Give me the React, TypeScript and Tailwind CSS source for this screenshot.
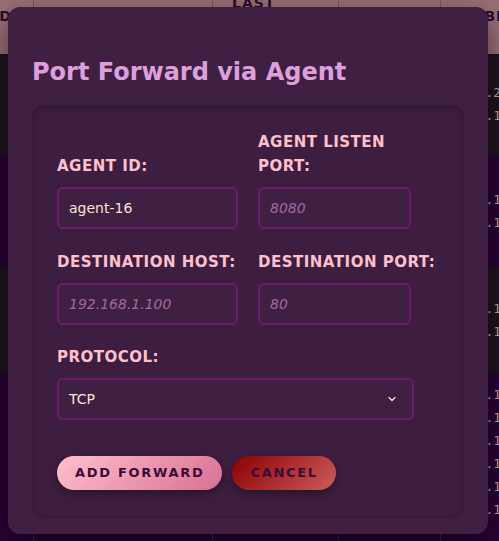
import React from "react";

const font = { fontFamily: '"DejaVu Sans", "Liberation Sans", sans-serif' };

function Row({ bg, h, lines, first, second, third }: { bg: string; h: string; lines: string[]; first?: string; second?: string; third?: string }) {
  return (
    <div className={`grid grid-cols-[33px_179px_126px_102px_1fr] ${bg} ${h}`}>
      <div />
      <div className="border-l border-[#3a2a3a] px-5 flex items-center text-[13px] text-[#b8a8b0]">{first}</div>
      <div className="border-l border-[#3a2a3a] px-[19px] flex items-center text-[13px] text-[#b8a8b0]">{second}</div>
      <div className="border-l border-[#3a2a3a] px-[19px] flex items-center text-[13px] text-[#b8a8b0]">{third}</div>
      <div className="border-l border-[#3a2a3a] pl-[21px] flex flex-col justify-center gap-[5px] text-[13px] leading-[18px] text-[#b8a8b0] whitespace-nowrap overflow-hidden" style={{ fontFamily: '"DejaVu Sans Mono", monospace' }}>
        {lines.map((l, i) => (
          <div key={i}>{l}</div>
        ))}
      </div>
    </div>
  );
}

function Field({ label, placeholder, value, w }: { label: React.ReactNode; placeholder?: string; value?: string; w: string }) {
  return (
    <div className="flex flex-col justify-end">
      <label className="text-[15px] leading-[24px] font-bold tracking-[0.5px] text-[#ffc0cb] uppercase mb-[9px]">{label}</label>
      <input
        readOnly
        defaultValue={value}
        placeholder={placeholder}
        className={`${w} h-[42px] rounded-[6px] border-2 border-[#6c1c70] bg-[#3f1f42] px-[10px] text-[14px] text-[#f5e6d3] placeholder:italic placeholder:text-[#a06aa0] outline-none`}
        style={font}
      />
    </div>
  );
}

export default function App() {
  return (
    <div className="relative w-[499px] h-[541px] overflow-hidden bg-[#290333]" style={font}>
      {/* background table */}
      <div className="flex flex-col">
        <div className="grid grid-cols-[33px_179px_126px_102px_1fr] bg-[#9a7077] h-[54px] text-[14px] font-bold text-[#2a0a2a] tracking-[1px]">
          <div className="flex items-start pt-[6px] overflow-hidden whitespace-nowrap"><span className="ml-[-7px]">ID</span></div>
          <div className="border-l border-[#7a5660]" />
          <div className="border-l border-[#7a5660] px-[19px] leading-[22px] mt-[-8px]">LAST<br />SEEN</div>
          <div className="border-l border-[#7a5660]" />
          <div className="border-l border-[#7a5660] pl-[20px] pt-[6px] whitespace-nowrap overflow-hidden">SUBNET</div>
        </div>
        <Row bg="bg-[#1f131f]" h="h-[101px]" lines={["172.20.0.5", "172.16.0.8"]} />
        <Row bg="bg-[#290333]" h="h-[113px]" lines={["172.16.0.3", "172.16.4.1"]} />
        <Row bg="bg-[#1f131f]" h="h-[104px]" lines={["172.16.2.7", "172.16.9.2"]} />
        <Row bg="bg-[#290333]" h="h-[160px]" lines={["172.16.0.1", "172.16.0.2", "172.16.0.3", "172.16.0.4", "172.16.0.5", "172.16.0.6"]} />
        <Row bg="bg-[#290333]" h="h-[40px]" lines={["172.16.1.1"]} first="katana" second="6:50:12" third="4m 1s" />
      </div>

      {/* modal */}
      <div className="absolute left-[8px] top-[7px] w-[480px] h-[527px] rounded-[12px] bg-[#3f1f42] shadow-[0_10px_30px_rgba(0,0,0,0.5)] px-6 pt-[49px]">
        <h2 className="text-[24px] leading-[32px] font-bold text-[#dda0dd] mb-[17px]">Port Forward via Agent</h2>
        <div className="rounded-[12px] bg-[#3d1e40] border border-[#381a3b] shadow-[inset_0_2px_6px_rgba(0,0,0,0.25)] px-6 pt-6 pb-[27px]">
          <div className="grid grid-cols-[181px_181px] gap-x-5 gap-y-[21px]">
            <Field label="Agent ID:" value="agent-16" w="w-[181px]" />
            <Field label={<>Agent Listen<br />Port:</>} placeholder="8080" w="w-[153px]" />
            <Field label="Destination Host:" placeholder="192.168.1.100" w="w-[181px]" />
            <Field label="Destination Port:" placeholder="80" w="w-[153px]" />
          </div>
          <div className="mt-[20px] flex flex-col">
            <label className="text-[15px] leading-[24px] font-bold tracking-[0.5px] text-[#ffc0cb] uppercase mb-[9px]">Protocol:</label>
            <div className="relative w-[357px] h-[42px] rounded-[6px] border-2 border-[#6c1c70] bg-[#3f1f42] px-[10px] flex items-center text-[14px] text-[#f5e6d3]">
              TCP
              <svg className="absolute right-[16px] top-[16px]" width="8" height="6" viewBox="0 0 8 6" fill="none">
                <path d="M1 1.5 L4 4.5 L7 1.5" stroke="#f5e6d3" strokeWidth="1.3" strokeLinecap="round" strokeLinejoin="round" />
              </svg>
            </div>
          </div>
          <div className="mt-[36px] flex gap-[10px]">
            <button className="h-[34px] px-[18px] rounded-full bg-[linear-gradient(135deg,#ffc0cb,#d87093)] text-[13px] font-bold tracking-[1.7px] text-[#3a0a3a] shadow-[0_4px_10px_rgba(0,0,0,0.35)]">
              ADD FORWARD
            </button>
            <button className="h-[34px] px-[18px] rounded-full bg-[linear-gradient(135deg,#8b0000,#cd5c5c)] text-[13px] font-bold tracking-[1.7px] text-[#3a0a3a] shadow-[0_4px_10px_rgba(0,0,0,0.35)]">
              CANCEL
            </button>
          </div>
        </div>
      </div>
    </div>
  );
}
